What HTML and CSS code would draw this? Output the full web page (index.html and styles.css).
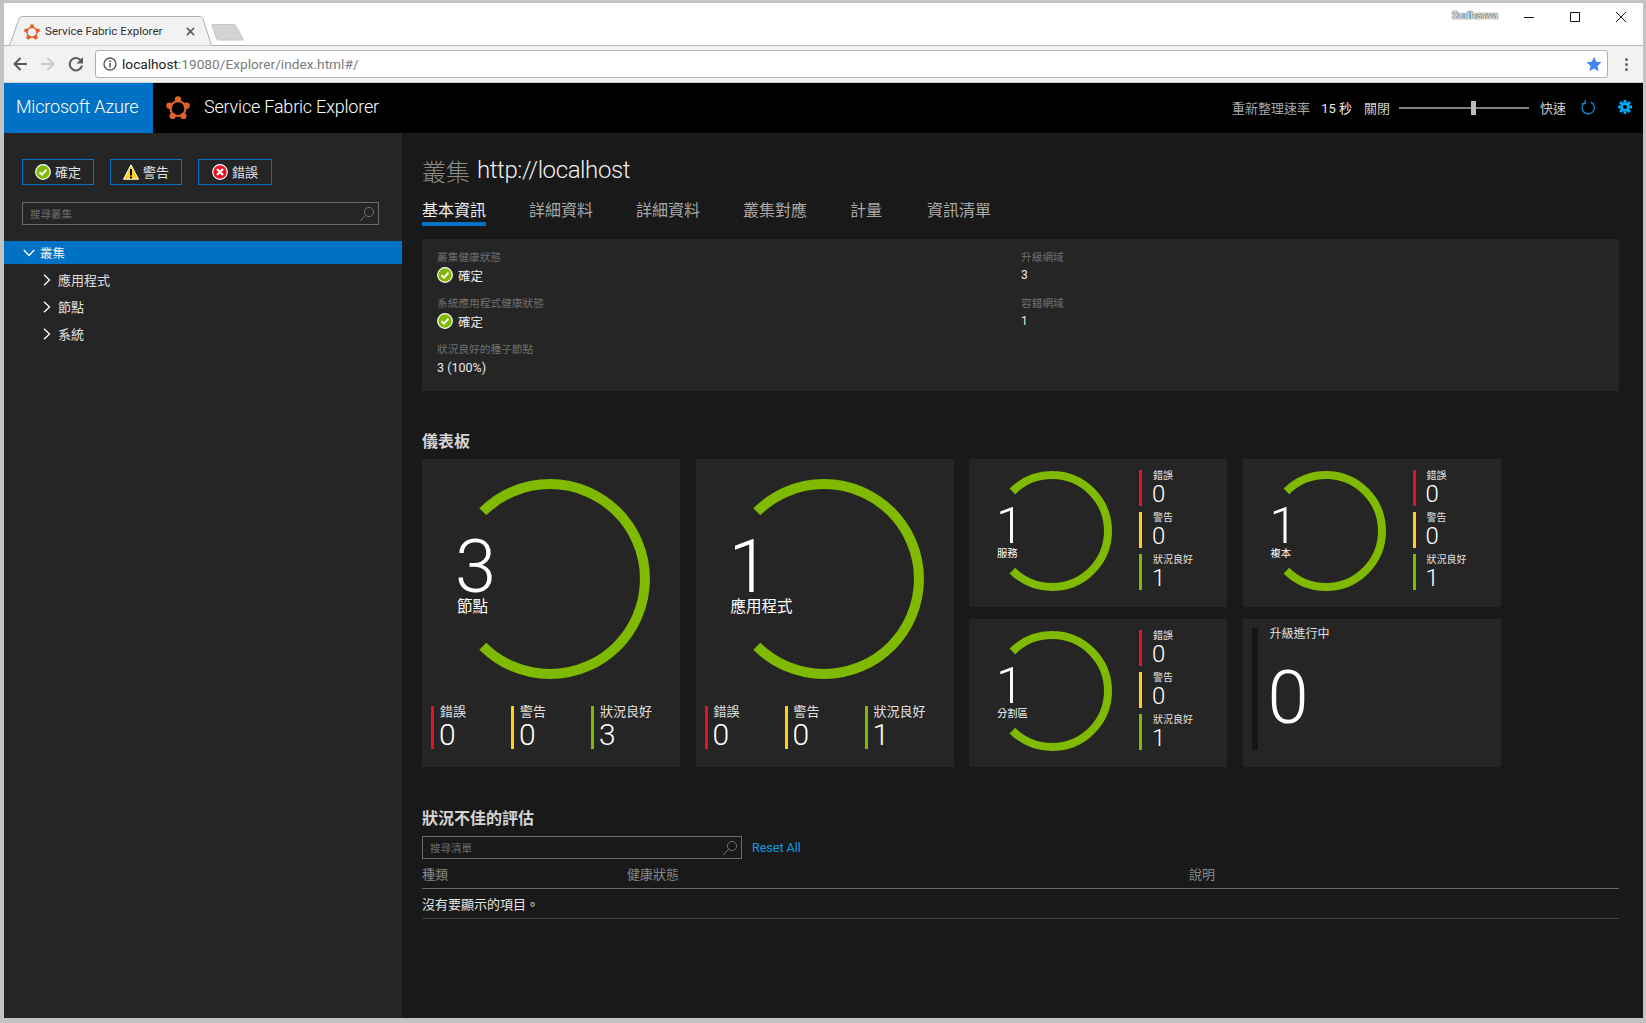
FILE: index.html
```html
<!DOCTYPE html>
<html lang="zh-Hant">
<head>
<meta charset="utf-8">
<title>Service Fabric Explorer</title>
<link rel="stylesheet" href="styles.css">
</head>
<body>
<svg class="defs" width="0" height="0">
  <defs>
    <symbol id="ok" viewBox="0 0 16 16"><circle cx="8" cy="8" r="7.300" fill="#7fba00" stroke="#fff" stroke-width="1.200"/><path d="M4.600 8.200l2.400 2.400 4.400-4.800" fill="none" stroke="#fff" stroke-width="2"/></symbol>
    <symbol id="warn" viewBox="0 0 16 16"><path d="M8 .8L15.500 15.200H.5z" fill="#fcd116" stroke="#fff" stroke-width="1"/><path d="M7 5h2v6.500H7zM7 12.500h2v2H7z" fill="#000"/></symbol>
    <symbol id="err" viewBox="0 0 16 16"><circle cx="8" cy="8" r="7.300" fill="#e81123" stroke="#fff" stroke-width="1.200"/><path d="M5 5l6 6M11 5l-6 6" fill="none" stroke="#fff" stroke-width="2.200"/></symbol>
    <symbol id="logo" viewBox="0 0 24 24"><circle cx="12" cy="12.500" r="7.500" fill="none" stroke="currentColor" stroke-width="2.200"/><g fill="currentColor"><circle cx="12" cy="3.300" r="3.100"/><circle cx="20.700" cy="9.700" r="3.100"/><circle cx="17.400" cy="20" r="3.100"/><circle cx="6.600" cy="20" r="3.100"/><circle cx="3.300" cy="9.700" r="3.100"/></g></symbol>
    <symbol id="search" viewBox="0 0 16 16"><circle cx="10" cy="6" r="4.600" fill="none" stroke="currentColor"/><path d="M6.700 9.300L1 15" fill="none" stroke="currentColor"/></symbol>
    <symbol id="chev-r" viewBox="0 0 10 12"><path d="M2 .8L7.500 6 2 11.200" fill="none" stroke="currentColor" stroke-width="1.300"/></symbol>
    <symbol id="chev-d" viewBox="0 0 12 10"><path d="M.8 2L6 7.500 11.200 2" fill="none" stroke="currentColor" stroke-width="1.300"/></symbol>
  </defs>
</svg>
<div class="window">
  <div class="tabstrip">
    <div class="tab">
      <svg class="tab-shape" viewBox="0 0 206 30" width="206" height="30"><path d="M0 29.500h1.500L11 3q1-2.500 3-2.500h178q2 0 3 2.500l8.500 26.500h2.500" fill="#f2f2f2" stroke="#b0b0b0"/></svg>
      <svg class="tab-logo"><use href="#logo"/></svg>
      <span class="tab-title">Service Fabric Explorer</span>
      <svg class="tab-close" viewBox="0 0 10 10"><path d="M1 1l8 8M9 1l-8 8" stroke="#5a5a5a" stroke-width="1.700"/></svg>
    </div>
    <svg class="newtab" viewBox="0 0 36 18" width="34" height="17"><path d="M1 1.500q0-1 1-1h22q1.500 0 2 1L34 15.500q.5 1.500-1 1.500H8q-1.500 0-2-1z" fill="#d4d4d4" stroke="#c4c4c4"/></svg>
    <div class="winctl">
      <span class="user">Sudhanva</span>
      <svg class="ctl" viewBox="0 0 46 30" width="46" height="30"><path d="M19 14.500h10" stroke="#111"/></svg>
      <svg class="ctl" viewBox="0 0 46 30" width="46" height="30"><path d="M19.500 9.500h9v9h-9z" fill="none" stroke="#111"/></svg>
      <svg class="ctl" viewBox="0 0 46 30" width="46" height="30"><path d="M19 9l10 10M29 9L19 19" stroke="#111" fill="none"/></svg>
    </div>
  </div>
  <div class="toolbar">
    <svg class="nav" viewBox="0 0 16 16"><path d="M15 8H2.500M8.500 2L2.500 8l6 6" fill="none" stroke="#5a5a5a" stroke-width="2"/></svg>
    <svg class="nav" viewBox="0 0 16 16"><path d="M1 8h12.500M7.500 2l6 6-6 6" fill="none" stroke="#c8c8c8" stroke-width="2"/></svg>
    <svg class="nav" viewBox="0 0 16 16"><path d="M13.500 5.500A6.200 6.200 0 1 0 14 9.500" fill="none" stroke="#5a5a5a" stroke-width="2"/><path d="M15 1v6.500H8.500z" fill="#5a5a5a"/></svg>
    <div class="omnibox">
      <svg class="info" viewBox="0 0 14 14"><circle cx="7" cy="7" r="6" fill="none" stroke="#5a5a5a" stroke-width="1.400"/><path d="M6.200 6h1.600v4.500H6.200zM6.200 3.300h1.600v1.600H6.200z" fill="#5a5a5a"/></svg>
      <span class="url"><span class="host">localhost</span>:19080/Explorer/index.html#/</span>
      <svg class="star" viewBox="0 0 16 16"><path d="M8 .8l2.200 4.900 5.300.6-4 3.600 1.100 5.300L8 12.500l-4.600 2.700 1.100-5.300-4-3.600 5.300-.6z" fill="#4285f4"/></svg>
    </div>
    <div class="dots"><i></i><i></i><i></i></div>
  </div>
  <header class="appbar">
    <div class="azure">Microsoft Azure</div>
    <svg class="brand-logo"><use href="#logo"/></svg>
    <div class="brand">Service Fabric Explorer</div>
    <div class="refresh">
      <span class="r-label">重新整理速率</span>
      <span class="r-value">15 秒</span>
      <span class="r-off">關閉</span>
      <div class="slider"><span class="thumb"></span></div>
      <span class="r-fast">快速</span>
      <svg class="r-icon" viewBox="0 0 16 16"><path d="M4.200 2.700A6.600 6.600 0 1 0 10.500 2.300" fill="none" stroke="#0c8fe0" stroke-width="1.300"/><path d="M4.500 0v3.800H.8" fill="none" stroke="#0c8fe0" stroke-width="1.300"/></svg>
      <svg class="r-gear" viewBox="0 0 16 16"><g fill="#00a6f0"><circle cx="8" cy="8" r="5.500"/><path d="M6.300 0h3.400v3H6.300zM6.300 13h3.400v3H6.300zM0 6.300h3v3.400H0zM13 6.300h3v3.400h-3z"/><path d="M6.300 0h3.400v3H6.300zM6.300 13h3.400v3H6.300zM0 6.300h3v3.400H0zM13 6.300h3v3.400h-3z" transform="rotate(45 8 8)"/></g><circle cx="8" cy="8" r="2.300" fill="#000"/></svg>
    </div>
  </header>
  <div class="body">
    <aside class="sidebar">
      <div class="filters">
        <button class="filter"><svg class="ico"><use href="#ok"/></svg><span>確定</span></button>
        <button class="filter"><svg class="ico"><use href="#warn"/></svg><span>警告</span></button>
        <button class="filter wide"><svg class="ico"><use href="#err"/></svg><span>錯誤</span></button>
      </div>
      <div class="search side"><span>搜尋叢集</span><svg><use href="#search"/></svg></div>
      <nav class="tree">
        <div class="node root"><svg class="chev-d"><use href="#chev-d"/></svg>叢集</div>
        <div class="node"><svg class="chev-r"><use href="#chev-r"/></svg>應用程式</div>
        <div class="node"><svg class="chev-r"><use href="#chev-r"/></svg>節點</div>
        <div class="node"><svg class="chev-r"><use href="#chev-r"/></svg>系統</div>
      </nav>
    </aside>
    <main class="main">
      <h1 class="title"><span class="kind">叢集</span><span class="name">http://localhost</span></h1>
      <div class="tabs">
        <span class="t active">基本資訊</span>
        <span class="t">詳細資料</span>
        <span class="t">詳細資料</span>
        <span class="t">叢集對應</span>
        <span class="t">計量</span>
        <span class="t">資訊清單</span>
      </div>
      <section class="essentials">
        <div>
          <div class="field"><div class="lbl">叢集健康狀態</div><div class="val"><svg class="ico-s"><use href="#ok"/></svg>確定</div></div>
          <div class="field"><div class="lbl">系統應用程式健康狀態</div><div class="val"><svg class="ico-s"><use href="#ok"/></svg>確定</div></div>
          <div class="field"><div class="lbl">狀況良好的種子節點</div><div class="val">3 (100%)</div></div>
        </div>
        <div>
          <div class="field"><div class="lbl">升級網域</div><div class="val small-val">3</div></div>
          <div class="field"><div class="lbl">容錯網域</div><div class="val small-val">1</div></div>
        </div>
      </section>
      <h2 class="heading dash">儀表板</h2>
      <section class="dashboard">
        <article class="card big">
          <svg class="ring" viewBox="0 0 200 200" width="200" height="200"><path d="M32.800 32.800a95 95 0 1 1 0 134.400" fill="none" stroke="#7fba00" stroke-width="10"/></svg>
          <div class="count">3</div>
          <div class="count-label">節點</div>
          <div class="stats">
            <div class="stat e"><span>錯誤</span><b>0</b></div>
            <div class="stat w"><span>警告</span><b>0</b></div>
            <div class="stat o"><span>狀況良好</span><b>3</b></div>
          </div>
        </article>
        <article class="card big">
          <svg class="ring" viewBox="0 0 200 200" width="200" height="200"><path d="M32.800 32.800a95 95 0 1 1 0 134.400" fill="none" stroke="#7fba00" stroke-width="10"/></svg>
          <div class="count">1</div>
          <div class="count-label">應用程式</div>
          <div class="stats">
            <div class="stat e"><span>錯誤</span><b>0</b></div>
            <div class="stat w"><span>警告</span><b>0</b></div>
            <div class="stat o"><span>狀況良好</span><b>1</b></div>
          </div>
        </article>
        <article class="card small">
          <svg class="ring" viewBox="0 0 120 120" width="120" height="120"><path d="M20.400 20.400a56 56 0 1 1 0 79.200" fill="none" stroke="#7fba00" stroke-width="8"/></svg>
          <div class="lead"><div class="count">1</div><div class="count-label">服務</div></div>
          <div class="stats">
            <div class="stat e"><span>錯誤</span><b>0</b></div>
            <div class="stat w"><span>警告</span><b>0</b></div>
            <div class="stat o"><span>狀況良好</span><b>1</b></div>
          </div>
        </article>
        <article class="card small">
          <svg class="ring" viewBox="0 0 120 120" width="120" height="120"><path d="M20.400 20.400a56 56 0 1 1 0 79.200" fill="none" stroke="#7fba00" stroke-width="8"/></svg>
          <div class="lead"><div class="count">1</div><div class="count-label">複本</div></div>
          <div class="stats">
            <div class="stat e"><span>錯誤</span><b>0</b></div>
            <div class="stat w"><span>警告</span><b>0</b></div>
            <div class="stat o"><span>狀況良好</span><b>1</b></div>
          </div>
        </article>
        <article class="card small">
          <svg class="ring" viewBox="0 0 120 120" width="120" height="120"><path d="M20.400 20.400a56 56 0 1 1 0 79.200" fill="none" stroke="#7fba00" stroke-width="8"/></svg>
          <div class="lead"><div class="count">1</div><div class="count-label">分割區</div></div>
          <div class="stats">
            <div class="stat e"><span>錯誤</span><b>0</b></div>
            <div class="stat w"><span>警告</span><b>0</b></div>
            <div class="stat o"><span>狀況良好</span><b>1</b></div>
          </div>
        </article>
        <article class="card upgrade">
          <div class="up-bar"></div>
          <div><div class="up-label">升級進行中</div><div class="up-num">0</div></div>
        </article>
      </section>
      <h2 class="heading unhealthy">狀況不佳的評估</h2>
      <div class="listbar">
        <div class="search list"><span>搜尋清單</span><svg><use href="#search"/></svg></div>
        <a class="reset">Reset All</a>
      </div>
      <div class="thead"><span>種類</span><span>健康狀態</span><span>說明</span></div>
      <div class="empty">沒有要顯示的項目。</div>
    </main>
  </div>
</div>
</body>
</html>
```
FILE: styles.css
```css
* { box-sizing: border-box; }
html, body { margin: 0; height: 100%; }
body {
  background: #c3c3c3;
  padding: 3px 3px 5px 4px;
  font-family: "Roboto", "Noto Sans CJK TC", sans-serif;
  overflow: hidden;
}
.defs { position: absolute; }
.window { height: 1015px; display: flex; flex-direction: column; background: #191919; }

/* browser chrome */
.tabstrip { height: 43px; flex: none; background: #fff; border-bottom: 1px solid #b4b4b4; display: flex; align-items: flex-end; padding-left: 4px; }
.tab { position: relative; width: 206px; height: 30px; margin-bottom: -1px; display: flex; align-items: center; padding-left: 16px; font-size: 12px; color: #333; }
.tab-shape { position: absolute; left: 0; top: 0; }
.tab-logo { position: relative; width: 16px; height: 16px; color: #e0622a; margin-top: 1px; }
.tab-title { position: relative; margin-left: 5px; width: 137px; font-size: 11.600px; white-space: nowrap; }
.tab-close { position: relative; width: 9px; height: 9px; margin-left: 4px; }
.newtab { margin-left: -3px; margin-bottom: 4px; flex: none; }
.winctl { margin-left: auto; align-self: flex-start; display: flex; align-items: flex-start; }
.user { font-size: 10.500px; color: #fff; text-shadow: 0 0 1px #333, 0 0 1px #333, 0 0 1px #333; margin-top: 6px; margin-right: 2px; width: 51px; white-space: nowrap; }
.ctl { display: block; }
.toolbar { height: 37px; flex: none; background: #f2f2f2; border-bottom: 1px solid #d0d0d0; display: flex; align-items: center; padding-left: 8px; }
.nav { width: 16px; height: 16px; margin-right: 12px; flex: none; }
.omnibox { width: 1513px; height: 28px; margin-left: -1px; margin-top: -1px; background: #fff; border: 1px solid #b0b0b0; border-radius: 3px; display: flex; align-items: center; padding-left: 7px; }
.info { width: 14px; height: 14px; flex: none; }
.url { margin-left: 5px; font-size: 13.700px; color: #7b7b7b; white-space: nowrap; }
.host { color: #222; }
.star { width: 16px; height: 16px; margin-left: auto; margin-right: 5px; }
.dots { margin-left: 17px; display: flex; flex-direction: column; gap: 2px; }
.dots i { width: 3px; height: 3px; border-radius: 50%; background: #666; display: block; }

/* app bar */
.appbar { height: 50px; flex: none; background: #000; display: flex; align-items: center; color: #fff; }
.azure { width: 149px; height: 50px; background: #0072c6; font-size: 18px; font-weight: 300; letter-spacing: -.2px; display: flex; align-items: center; padding: 0 0 3px 12px; white-space: nowrap; }
.brand-logo { width: 24px; height: 24px; color: #e0622a; margin-left: 13px; }
.brand { margin: -3px 0 0 14px; font-size: 18px; font-weight: 300; letter-spacing: -.2px; white-space: nowrap; }
.refresh { margin-left: auto; display: flex; align-items: center; font-size: 13px; color: #d0d0d0; margin-top: -2px; }
.r-label { color: #a6a6a6; }
.r-value { margin-left: 11px; color: #e8e8e8; }
.r-off { margin-left: 12px; }
.slider { position: relative; width: 130px; height: 2px; background: #808080; margin: 2px 11px 0 9px; }
.thumb { position: absolute; left: 72px; top: -6px; width: 5px; height: 14px; background: #bdbdbd; }
.r-icon { width: 15px; height: 15px; margin-left: 15px; }
.r-gear { width: 14px; height: 14px; margin: 0 11px 0 22px; }

/* layout */
.body { flex: 1; min-height: 0; display: flex; }
.sidebar { width: 398px; flex: none; background: #252525; padding-top: 26px; color: #e0e0e0; }
.filters { display: flex; gap: 16px; padding-left: 18px; }
.filter { width: 72px; height: 26px; background: transparent; border: 1px solid #0072c6; color: #e0e0e0; font: 13px "Roboto", "Noto Sans CJK TC", sans-serif; padding: 0; display: flex; align-items: center; justify-content: center; gap: 4px; }
.filter span { margin-top: -2px; }
.filter.wide { width: 74px; }
.ico { width: 16px; height: 16px; flex: none; }
.search { display: flex; align-items: center; justify-content: space-between; height: 23px; border: 1px solid #6b6b6b; color: #6e6e6e; font-size: 10.500px; padding: 0 3px 0 7px; }
.search svg { width: 16px; height: 16px; color: #6e6e6e; }
.search.side { width: 357px; margin: 17px 0 0 18px; }
.tree { margin-top: 16px; font-size: 13px; }
.node { height: 27px; display: flex; align-items: center; padding-left: 38px; color: #e0e0e0; }
.node:nth-child(2) { margin-top: 2px; }
.root { height: 23px; background: #0072c6; padding-left: 19px; color: #f0f0f0; font-size: 12.500px; }
.chev-d { width: 12px; height: 10px; margin-right: 5px; color: #fff; }
.chev-r { width: 10px; height: 12px; margin-right: 6px; color: #fff; }

.main { flex: 1; min-width: 0; padding: 22px 24px 0 20px; color: #e6e6e6; }
.title { margin: 0; height: 30px; display: flex; align-items: center; font-weight: 300; font-size: 24px; }
.kind { color: #8c8c8c; margin-right: 7px; }
.name { color: #f0f0f0; font-size: 24px; font-weight: 300; letter-spacing: -.4px; }
.tabs { margin-top: 13px; display: flex; gap: 43px; font-size: 16px; color: #a8a8a8; }
.t { height: 28px; line-height: 26px; }
.t:last-child { margin-left: 2px; }
.t.active { color: #f0f0f0; border-bottom: 4px solid #0072c6; }
.essentials { margin-top: 13px; height: 152px; background: #252525; padding: 10px 14px 0 15px; display: grid; grid-template-columns: 1fr 1fr; }
.field { margin-bottom: 10px; }
.lbl { height: 16px; line-height: 18px; font-size: 10.700px; color: #707070; }
.val { height: 20px; display: flex; align-items: center; gap: 4px; font-size: 12.500px; color: #eaeaea; }
.small-val { font-size: 12px; }
.ico-s { width: 16px; height: 16px; margin-right: 1px; }
.heading { margin: 0; height: 22px; line-height: 22px; font-size: 16px; font-weight: 700; color: #d4d4d4; }
.dash { margin-top: 40px; margin-bottom: 6px; }

/* dashboard */
.dashboard { display: grid; grid-template-columns: repeat(4, 258px); grid-template-rows: 148px 148px; gap: 12px 15.500px; }
.card { position: relative; background: #252525; color: #fff; }
.card .ring { position: absolute; }
.card b { font-weight: 300; display: block; margin-left: -1px; }
.big { grid-row: span 2; padding: 71px 0 0 35px; }
.big .ring { left: 28px; top: 20px; }
.big .count { font-size: 74px; font-weight: 300; line-height: 74px; margin-left: -2px; }
.big .count-label { font-size: 15.500px; line-height: 18px; margin-top: -6px; white-space: nowrap; }
.big .stats { position: absolute; left: 9px; top: 247px; display: flex; }
.big .stat { width: 80px; height: 43px; border-left: 3px solid; padding-left: 6px; }
.big .stat span { display: block; font-size: 13px; line-height: 11px; color: #e0e0e0; white-space: nowrap; }
.big .stat b { font-size: 30px; line-height: 30px; margin-top: 3px; }
.e { border-color: #e81123 !important; }
.w { border-color: #fcd116 !important; }
.o { border-color: #7fba00 !important; }
.small { display: flex; }
.small .ring { left: 23px; top: 12px; }
.lead { position: relative; margin: 42px 0 0 28px; width: 142px; flex: none; }
.small .count { font-size: 50px; font-weight: 300; line-height: 50px; margin-left: -1px; }
.small .count-label { font-size: 10.300px; line-height: 14px; margin-top: -4px; }
.small .stats { margin-top: 11px; display: flex; flex-direction: column; gap: 6px; }
.small .stat { height: 36px; border-left: 3px solid; padding-left: 11px; }
.small .stat span { display: block; font-size: 10px; line-height: 11px; color: #e0e0e0; white-space: nowrap; }
.small .stat b { font-size: 24px; line-height: 24px; margin-top: 1px; }
.upgrade { display: flex; padding: 9px 0 0 9px; }
.up-bar { width: 6px; height: 122px; background: #141414; margin-right: 12px; }
.up-label { font-size: 12px; line-height: 12px; color: #e0e0e0; }
.up-num { font-size: 74px; font-weight: 300; line-height: 74px; margin: 21px 0 0 -2px; }

/* unhealthy */
.unhealthy { margin-top: 41px; }
.listbar { margin-top: 6px; display: flex; align-items: center; gap: 10px; }
.search.list { width: 320px; }
.reset { color: #0c9de0; font-size: 12.500px; font-weight: 400; }
.thead { height: 30px; border-bottom: 1px solid #6a6a6a; display: grid; grid-template-columns: 205px 562px 1fr; align-items: center; font-size: 13px; color: #888; }
.empty { height: 30px; border-bottom: 1px solid #444; display: flex; align-items: center; font-size: 13px; color: #e6e6e6; }
```
